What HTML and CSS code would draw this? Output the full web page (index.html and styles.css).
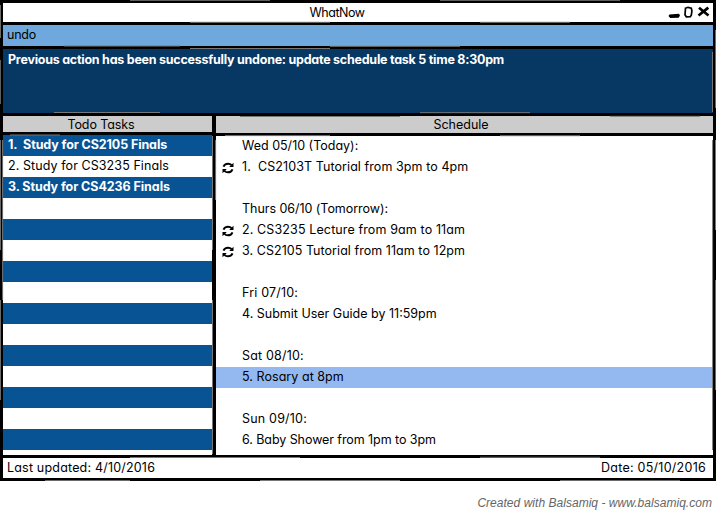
FILE: index.html
```html
<!DOCTYPE html>
<html lang="en">
<head>
<meta charset="utf-8">
<title>WhatNow</title>
<link rel="stylesheet" href="styles.css">
</head>
<body>
<svg class="defs" aria-hidden="true">
  <symbol id="repeat" viewBox="0 0 12 12">
    <path d="M1.500 4.700C2.200 2.800 3.800 1.700 6 1.700c1.600 0 2.700.5 3.600 1.500M10.500 7.300C9.800 9.200 8.200 10.300 6 10.300c-1.600 0-2.700-.5-3.600-1.500" fill="none" stroke="#000" stroke-width="1.900"/>
    <path d="M11.500.7v4.300H7.200zM.5 11.300V7h4.300z"/>
  </symbol>
</svg>
<main class="window">
  <header class="title"><span class="n48">WhatNow</span>
    <svg class="controls" viewBox="0 0 46 18">
      <path d="M1.500 13 2.500 11.500l9.500-.7 1 1.700-1.300 2.200-8.500.3z"/>
      <path d="M18.500 5.200 21 4.300l3.300.8.600 3-.6 4-1 1.500-4 .2-1.300-2z" fill="none" stroke="#000" stroke-width="1.700"/>
      <path d="M32 4.800 41.500 12.500M41.300 4.600 31.500 12.500" stroke="#000" stroke-width="2.700"/>
    </svg>
  </header>
  <div class="command"><span class="n22">undo</span></div>
  <div class="message"><span class="n24">Previous action has been successfully undone: update schedule task 5 time 8:30pm</span></div>
  <div class="columns">
    <section class="todo">
      <h2><span class="n10">Todo Tasks</span></h2>
      <div class="rows">
        <div><span class="n10">1.&nbsp; Study for CS2105 Finals</span></div>
        <div><span class="p8">2. Study for CS3235 Finals</span></div>
        <div><span class="n7">3. Study for CS4236 Finals</span></div>
      </div>
    </section>
    <section class="schedule">
      <h2>Schedule</h2>
      <div class="rows">
        <div>Wed 05/10 (Today):</div>
        <div><svg class="icon"><use href="#repeat"/></svg><span class="p8">1.&nbsp; CS2103T Tutorial from 3pm to 4pm</span></div>
        <div></div>
        <div><span class="n4">Thurs 06/10 (Tomorrow):</span></div>
        <div><svg class="icon"><use href="#repeat"/></svg><span class="p12">2. CS3235 Lecture from 9am to 11am</span></div>
        <div><svg class="icon"><use href="#repeat"/></svg><span class="p5">3. CS2105 Tutorial from 11am to 12pm</span></div>
        <div></div>
        <div><span class="p20">Fri 07/10:</span></div>
        <div>4. Submit User Guide by 11:59pm</div>
        <div></div>
        <div><span class="p20">Sat 08/10:</span></div>
        <div class="selected"><span class="p5">5. Rosary at 8pm</span></div>
        <div></div>
        <div><span class="p20">Sun 09/10:</span></div>
        <div><span class="n7">6. Baby Shower from 1pm to 3pm</span></div>
      </div>
    </section>
  </div>
  <footer class="status"><span class="p20">Last updated: 4/10/2016</span><span class="p26">Date: 05/10/2016</span></footer>
  <svg class="sketch" viewBox="0 0 716 481" aria-hidden="true">
    <path d="M130 .3H270M440 .3H620M190 22.300H330M480 22.300H570M64 46H180M330 46.300H460M190 48.500H330M54 112.500H160M240 116.500H400M420 112.700H530M610 116.300H700M10 135H60M225 135.600H330M500 135.700H580M130 457.500H300M480 457.300H600M45 480.600H130M260 480.500H400M560 480.600H680"/>
    <path d="M.4 5V38M.3 60V104M.4 140V250M.4 300V400M212.500 136V250M212.500 300V454M215.600 140V200M712.500 52V112M715.600 30V108M715.500 140V230M715.600 280V390M712.600 140V450M2.600 140V300"/>
  </svg>
</main>
<p class="credit">Created with Balsamiq - www.balsamiq.com</p>
</body>
</html>
```
FILE: styles.css
```css
* { box-sizing: border-box; }
body { margin: 0; width: 716px; height: 512px; overflow: hidden; background: #fff; color: #000; font: 12.5px/21px Inter, "Open Sans", sans-serif; font-feature-settings: "cv11"; white-space: nowrap; }
.defs { display: none; }
.window { position: relative; height: 481px; background: #000; padding: 3px; display: flex; flex-direction: column; gap: 3px; }
.sketch { position: absolute; inset: 0; width: 716px; height: 481px; fill: none; stroke: #777; stroke-width: 1; }
.title { height: 19px; background: #fff; display: flex; align-items: center; justify-content: center; position: relative; padding-right: 42px; }
.controls { position: absolute; right: 0; top: 0; width: 46px; height: 18px; }
.command { height: 21px; background: #6fa8dc; padding-left: 4px; line-height: 19px; }
.message { height: 64px; background: #073763; color: #fff; font-weight: 700; padding-left: 5px; }
.columns { height: 339px; display: flex; gap: 4px; }
.todo { width: 209px; }
.schedule { flex: 1; }
.columns section { display: flex; flex-direction: column; gap: 3px; }
h2 { margin: 0; height: 16px; background: #ccc; font-size: 12.5px; line-height: 17px; font-weight: 400; text-align: center; padding-right: 13px; }
.schedule h2 { height: 17px; line-height: 18px; padding-right: 7px; }
.rows { flex: 1; background: #fff; overflow: hidden; }
.rows div { height: 21px; line-height: 19px; }
.todo .rows { background: repeating-linear-gradient(#085394 0 21px, #fff 21px 42px); padding-left: 5px; }
.todo .rows div:nth-child(odd) { color: #fff; font-weight: 700; }
.schedule .rows div { padding-left: 26px; position: relative; }
.icon { position: absolute; left: 6px; top: 5px; width: 12px; height: 12px; }
.schedule .rows .selected { background: #94b9f1; }
.status { height: 20px; background: #fff; display: flex; justify-content: space-between; padding: 0 7px 0 4px; line-height: 19px; }
.credit { margin: 12px 4px 0 0; text-align: right; font: italic 12px/20px "Liberation Sans", sans-serif; letter-spacing: .03px; color: #666; }
.n48 { letter-spacing: -.48px; }
.n24 { letter-spacing: -.243px; }
.n22 { letter-spacing: -.22px; }
.n10 { letter-spacing: -.1px; }
.n7 { letter-spacing: -.07px; }
.n4 { letter-spacing: -.04px; }
.p5 { letter-spacing: .05px; }
.p8 { letter-spacing: .08px; }
.p12 { letter-spacing: .12px; }
.p20 { letter-spacing: .19px; }
.p26 { letter-spacing: .26px; }
```
